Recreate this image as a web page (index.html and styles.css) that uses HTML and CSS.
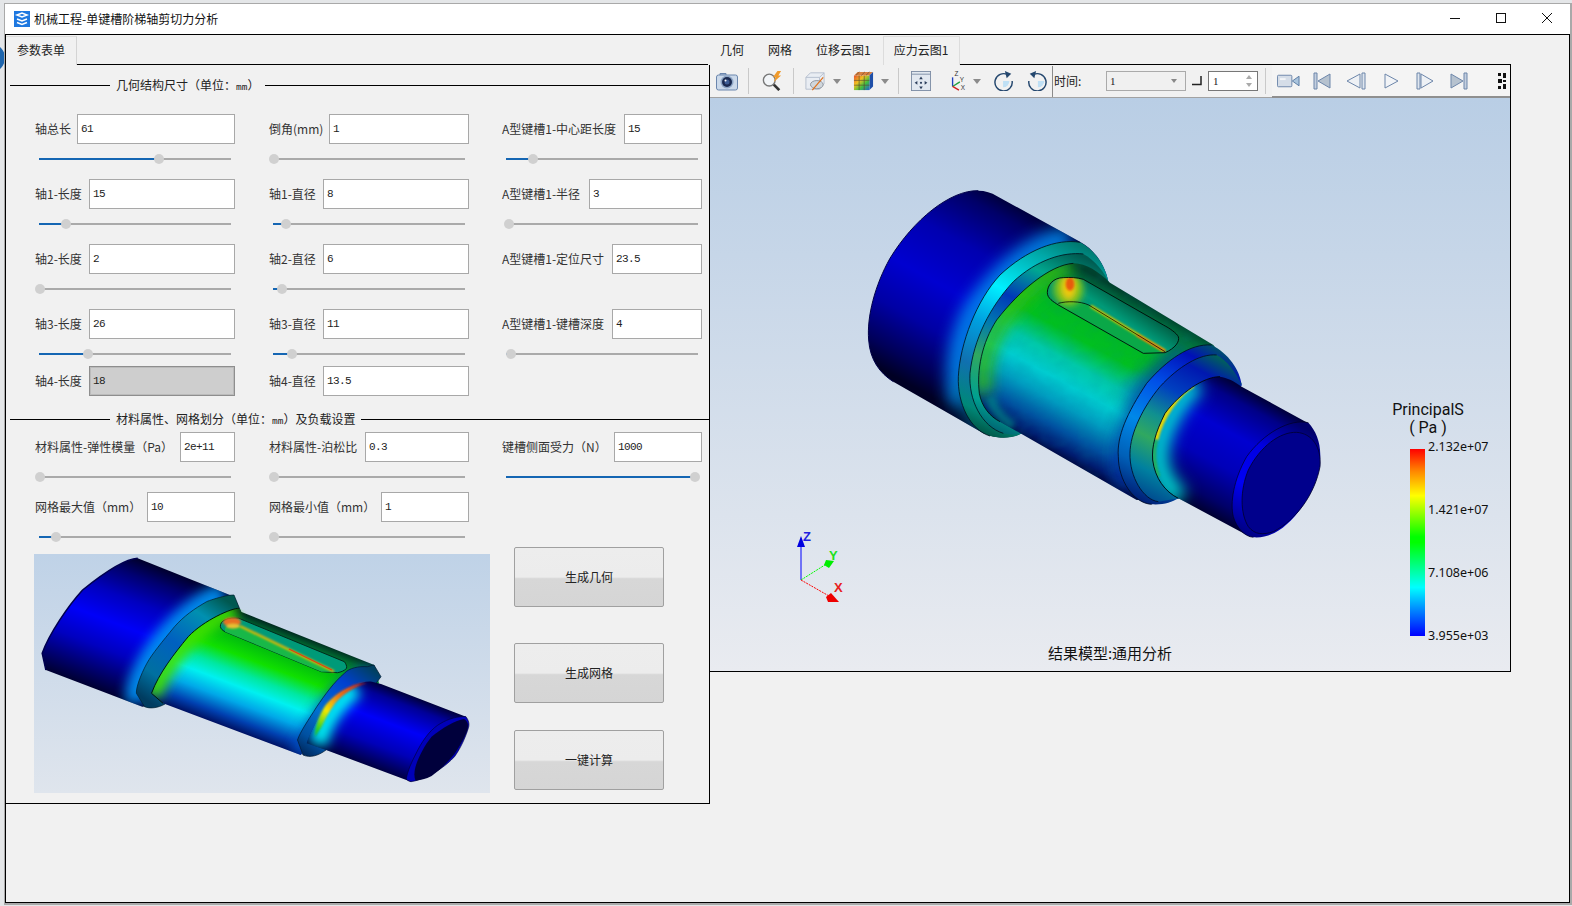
FILE: index.html
```html
<!DOCTYPE html>
<html lang="zh-CN">
<head>
<meta charset="utf-8">
<title>机械工程-单键槽阶梯轴剪切力分析</title>
<link rel="stylesheet" href="styles.css">
</head>
<body>
<div class="desk-blob"></div>
<div class="window">
  <header class="titlebar">
    <svg class="app-icon" viewBox="0 0 16 16"><rect width="16" height="16" fill="#1e78e0"/><path d="M3 4l5-2 5 2-5 2zM3 8l5 2 5-2M3 11.500l5 2 5-2" fill="none" stroke="#fff" stroke-width="1.500"/></svg>
    <span class="title-text">机械工程-单键槽阶梯轴剪切力分析</span>
    <div class="win-controls">
      <svg class="win-btn" viewBox="0 0 10 10"><path d="M0 5.500h10" stroke="#111" fill="none"/></svg>
      <svg class="win-btn" viewBox="0 0 10 10"><rect x=".5" y=".5" width="9" height="9" stroke="#111" fill="none"/></svg>
      <svg class="win-btn" viewBox="0 0 10 10"><path d="M0 0l10 10M10 0L0 10" stroke="#111" fill="none"/></svg>
    </div>
  </header>
  <main class="client">
    <section class="left-panel">
      <div class="tabstrip"><div class="tab tab-form">参数表单</div></div>
      <div class="pane">
        <div class="sec-head first"><i class="rule-l"></i><span class="sec-text">几何结构尺寸（单位：<span class="mono">mm</span>）</span><i class="rule-r"></i></div>

        <div class="grid grid-a">
          <div class="field"><div class="row"><label>轴总长</label><div class="inp w158">61</div></div><div class="slider" style="--v:62.5%"><b></b><u></u></div></div>
          <div class="field"><div class="row"><label>倒角(mm)</label><div class="inp w140">1</div></div><div class="slider" style="--v:.5%"><b></b><u></u></div></div>
          <div class="field"><div class="row"><label>A型键槽1-中心距长度</label><div class="inp w78">15</div></div><div class="slider" style="--v:14%"><b></b><u></u></div></div>

          <div class="field"><div class="row"><label>轴1-长度</label><div class="inp w146">15</div></div><div class="slider" style="--v:14%"><b></b><u></u></div></div>
          <div class="field"><div class="row"><label>轴1-直径</label><div class="inp w146">8</div></div><div class="slider" style="--v:6.800%"><b></b><u></u></div></div>
          <div class="field"><div class="row"><label>A型键槽1-半径</label><div class="inp w113">3</div></div><div class="slider" style="--v:1.600%"><b></b><u></u></div></div>

          <div class="field"><div class="row"><label>轴2-长度</label><div class="inp w146">2</div></div><div class="slider" style="--v:.5%"><b></b><u></u></div></div>
          <div class="field"><div class="row"><label>轴2-直径</label><div class="inp w146">6</div></div><div class="slider" style="--v:4.700%"><b></b><u></u></div></div>
          <div class="field"><div class="row"><label>A型键槽1-定位尺寸</label><div class="inp w90">23.5</div></div></div>

          <div class="field"><div class="row"><label>轴3-长度</label><div class="inp w146">26</div></div><div class="slider" style="--v:25.500%"><b></b><u></u></div></div>
          <div class="field"><div class="row"><label>轴3-直径</label><div class="inp w146">11</div></div><div class="slider" style="--v:9.900%"><b></b><u></u></div></div>
          <div class="field"><div class="row"><label>A型键槽1-键槽深度</label><div class="inp w90">4</div></div><div class="slider" style="--v:2.600%"><b></b><u></u></div></div>
        </div>

        <div class="grid grid-b">
          <div class="field"><div class="row"><label>轴4-长度</label><div class="inp w146 disabled">18</div></div></div>
          <div class="field"><div class="row"><label>轴4-直径</label><div class="inp w146">13.5</div></div></div>
        </div>

        <div class="sec-head second"><i class="rule-l"></i><span class="sec-text">材料属性、网格划分（单位：<span class="mono">mm</span>）及负载设置</span><i class="rule-r"></i></div>

        <div class="grid grid-c">
          <div class="field"><div class="row"><label>材料属性-弹性模量（Pa）</label><div class="inp w55">2e+11</div></div><div class="slider" style="--v:.5%"><b></b><u></u></div></div>
          <div class="field"><div class="row"><label>材料属性-泊松比</label><div class="inp w104">0.3</div></div><div class="slider" style="--v:.5%"><b></b><u></u></div></div>
          <div class="field"><div class="row"><label>键槽侧面受力（N）</label><div class="inp w88">1000</div></div><div class="slider" style="--v:98.400%"><b></b><u></u></div></div>
          <div class="field"><div class="row"><label>网格最大值（mm）</label><div class="inp w88">10</div></div><div class="slider" style="--v:8.900%"><b></b><u></u></div></div>
          <div class="field"><div class="row"><label>网格最小值（mm）</label><div class="inp w88">1</div></div><div class="slider" style="--v:.5%"><b></b><u></u></div></div>
        </div>

        <div class="lower">
          <svg class="preview" viewBox="0 0 456 239">
            <defs>
              <linearGradient id="bgPrev" x1="0" y1="0" x2="0" y2="1"><stop offset="0" stop-color="#bfd2e7"/><stop offset="1" stop-color="#dfe5ed"/></linearGradient>
              <filter id="p2" filterUnits="userSpaceOnUse" x="0" y="0" width="456" height="239"><feGaussianBlur stdDeviation="1.200"/></filter>
              <filter id="p6" filterUnits="userSpaceOnUse" x="0" y="0" width="456" height="239"><feGaussianBlur stdDeviation="6"/></filter>
              <linearGradient id="pBig" gradientUnits="userSpaceOnUse" x1="152" y1="23" x2="103" y2="151">
                <stop offset="0" stop-color="#00002c"/><stop offset=".12" stop-color="#000070"/><stop offset=".3" stop-color="#0000c0"/><stop offset=".5" stop-color="#0000f8"/><stop offset=".7" stop-color="#0000c0"/><stop offset=".9" stop-color="#000060"/><stop offset="1" stop-color="#000030"/>
              </linearGradient>
              <linearGradient id="pFl" gradientUnits="userSpaceOnUse" x1="190" y1="45" x2="118" y2="150">
                <stop offset="0" stop-color="#005850"/><stop offset=".2" stop-color="#0090b0"/><stop offset=".5" stop-color="#0060c0"/><stop offset=".8" stop-color="#0070a0"/><stop offset="1" stop-color="#003c60"/>
              </linearGradient>
              <linearGradient id="pMid" gradientUnits="userSpaceOnUse" x1="273" y1="84" x2="233" y2="189">
                <stop offset="0" stop-color="#002c20"/><stop offset=".07" stop-color="#006a30"/><stop offset=".2" stop-color="#00b810"/><stop offset=".36" stop-color="#10e000"/><stop offset=".5" stop-color="#00e8a0"/><stop offset=".62" stop-color="#00f0f0"/><stop offset=".76" stop-color="#00a8e8"/><stop offset=".9" stop-color="#0040b0"/><stop offset="1" stop-color="#001060"/>
              </linearGradient>
              <linearGradient id="pRf" gradientUnits="userSpaceOnUse" x1="335" y1="112" x2="270" y2="200">
                <stop offset="0" stop-color="#004060"/><stop offset=".25" stop-color="#0040d0"/><stop offset=".6" stop-color="#0070d0"/><stop offset=".85" stop-color="#0050a0"/><stop offset="1" stop-color="#002a60"/>
              </linearGradient>
              <linearGradient id="pSm" gradientUnits="userSpaceOnUse" x1="390" y1="146" x2="361" y2="222">
                <stop offset="0" stop-color="#000038"/><stop offset=".14" stop-color="#000098"/><stop offset=".42" stop-color="#0000f8"/><stop offset=".72" stop-color="#0000b8"/><stop offset="1" stop-color="#000040"/>
              </linearGradient>
              <linearGradient id="pHot" gradientUnits="userSpaceOnUse" x1="330" y1="132" x2="285" y2="190">
                <stop offset="0" stop-color="#d02008"/><stop offset=".3" stop-color="#f07010"/><stop offset=".58" stop-color="#f4e800"/><stop offset=".85" stop-color="#30d020"/><stop offset="1" stop-color="#00a070"/>
              </linearGradient>
              <clipPath id="pcBig"><path d="M103.700 4.300C90 5 66 22 48.600 36C34 52 15 80 8.200 99.300L11.900 116L108.300 152.700L207 58L200.200 42.700Z"/></clipPath>
              <clipPath id="pcMid"><path d="M204.800 54.300C198 54 170 66 154.200 82.700C140 100 125 119 117.500 139.300L129 149.300L266.700 201L345 129.300L340.200 111Z"/></clipPath>
              <clipPath id="pcSm"><path d="M338 127.700C330 126 312 134 301 142.700C290 152 276 178 272.700 189.300L292 196L377 227.700L432 162.700L347 130Z"/></clipPath>
            </defs>
            <rect width="456" height="239" fill="url(#bgPrev)"/>

            <path d="M103.700 4.300C90 5 66 22 48.600 36C34 52 15 80 8.200 99.300L11.900 116L108.300 152.700L131 150L207 58L200.200 42.700Z" fill="url(#pBig)"/>
            <g clip-path="url(#pcBig)">
              <path d="M190 42C170 46 140 70 118 104C108 122 102 134 104 148" fill="none" stroke="#0090f0" stroke-width="24" filter="url(#p6)" opacity=".95"/>
            </g>
            <path d="M103.700 4.300C90 5 66 22 48.600 36C34 52 15 80 8.200 99.300L11.900 116" fill="none" stroke="#000050" stroke-width="1.500"/>

            <path d="M200 41C190 41 172 47.700 172.600 47.700C160 55 150 62 140.500 72.700C128 88 118 100 112.900 109.300C106 122 102 134 102.400 139.300L110.600 152.700C116 155 124 154 131 150L207 58Z" fill="url(#pFl)" stroke="#002030" stroke-width=".7"/>
            <path d="M204.800 54.300C198 54 170 66 154.200 82.700C140 100 125 119 117.500 139.300L129 149.300L266.700 201L345 129.300L340.200 111L207 57.700Z" fill="url(#pMid)"/>
            <g clip-path="url(#pcMid)">
              <path d="M202 58C180 62 156 82 140 104C130 118 122 130 120 142" fill="none" stroke="#40e000" stroke-width="16" filter="url(#p6)"/>
              <path d="M340 122C315 125 295 150 280 175C272 190 268 195 268 200" fill="none" stroke="#0050c0" stroke-width="20" filter="url(#p6)" opacity=".9"/>
            </g>
            <path d="M204.800 54.300C198 54 170 66 154.200 82.700C140 100 125 119 117.500 139.300L129 149.300" fill="none" stroke="#00180c" stroke-width="1"/>

            <path d="M186.400 72.700C186 70 188 67 191 66C195 64 200 64 204.800 64.300L310.400 107.700C312 110 313 112 312.600 114.300C310 117 307 118 303.500 118.700L287.400 117.700L191 77.700C188 76 187 75 186.400 72.700Z" fill="#009a78" stroke="#002018" stroke-width=".9"/>
            <path d="M191 74C196 71 200 71 206 72L300 117.500L287.400 117.700L191 77.700Z" fill="#18b848"/>
            <path d="M206 72L300 117.500" fill="none" stroke="#e8b800" stroke-width="2.200" filter="url(#p2)"/>
            <path d="M255 95L298 116" fill="none" stroke="#e04010" stroke-width="1.300"/>
            <ellipse cx="198" cy="68" rx="9" ry="4.500" fill="#e87020" filter="url(#p2)"/>
            <ellipse cx="199" cy="72" rx="7" ry="2.500" fill="#e8c030" filter="url(#p2)"/>

            <path d="M333.300 112.700C325 112 315 114 310.400 119.300C300 128 290 142 282.800 152.700C275 165 266 178 263.500 186L269 201C276 204 284 202 292 196L347 122.700L340 111Z" fill="url(#pRf)" stroke="#001830" stroke-width=".7"/>

            <path d="M338 127.700C330 126 312 134 301 142.700C290 152 276 178 272.700 189.300L292 196L377 227.700L432 162.700L347 130Z" fill="url(#pSm)"/>
            <g clip-path="url(#pcSm)">
              <path d="M322 134C304 148 290 165 284 190" fill="none" stroke="#00f0f0" stroke-width="18" filter="url(#p6)"/>
            </g>
            <path d="M333 129C322 132 312 138 303 147C297 154 291 165 288 172L281 183C280 176 284 163 291 152C299 141 318 128 333 129Z" fill="url(#pHot)" filter="url(#p2)"/>

            <path d="M432 162.700C436 168 435 172 434.300 174.300C430 188 424 198 420.500 202.700C412 212 402 218 393 222.700C388 225 382 227 377 227.700C374 227 372.500 226 372.300 224.300C375 212 380 204 383.800 196C390 184 398 174 406.800 169.300C414 165 424 162 432 162.700Z" fill="#0000b8" stroke="#000030" stroke-width=".6"/>
            <path d="M430 165C422 166 408 174 397.600 182.700C390 192 384 204 381.500 212.700C380 218 380 223 381.500 226.700C386 226 392 225 397.600 222C406 216 414 208 420.500 200C427 190 434 178 434 172C434 168 432 166 430 165Z" fill="#00003c"/>
          </svg>
          <div class="buttons">
            <div class="btn">生成几何</div>
            <div class="btn btn-2">生成网格</div>
            <div class="btn btn-3">一键计算</div>
          </div>
        </div>
      </div>
    </section>

    <section class="right-panel">
      <div class="tabstrip tabs-right">
        <div class="tab plain t-first">几何</div>
        <div class="tab plain">网格</div>
        <div class="tab plain">位移云图1</div>
        <div class="tab active">应力云图1</div>
      </div>
      <div class="viewer">
        <div class="toolbar">
          <div class="tb-main">
            <svg class="ic w22 m6" viewBox="0 0 22 20"><path d="M4 4V2.500h6V4" fill="#a9bcd6" stroke="#6b86ad"/><rect x=".5" y="4" width="21" height="15" rx="2" fill="#cbd9ea" stroke="#6b86ad"/><circle cx="11" cy="11" r="6.500" fill="#8ea6c6"/><circle cx="11" cy="11" r="5" fill="#1b2a50"/><circle cx="11" cy="11" r="2.500" fill="#3d5c94"/><circle cx="9.500" cy="9.500" r="1" fill="#fff"/></svg>
            <i class="sep m10"></i>
            <svg class="ic w24 m11" viewBox="0 0 24 22"><circle cx="9" cy="10" r="6.500" fill="#f2f5f8" stroke="#777" stroke-width="1.500"/><path d="M14 15l6 6" stroke="#333" stroke-width="3"/><path d="M18 0l-5 7h3l-2 5 8-7h-3l3-5z" fill="#ef9a2c"/></svg>
            <i class="sep m9"></i>
            <svg class="ic w22 m10" viewBox="0 0 22 22"><path d="M1 7l5-5h15v12l-5 6H1z" fill="#e9edf3" stroke="#b3bdcc"/><path d="M1 7h15v13M16 7l5-5" fill="none" stroke="#b3bdcc"/><ellipse cx="13" cy="15" rx="7" ry="4.500" fill="#cfd6dc" stroke="#8b9199"/><path d="M8 21L20 7" stroke="#e07018" stroke-width="1.300"/></svg>
            <svg class="ic arrow m7" viewBox="0 0 8 5"><path d="M0 0h8L4 5z" fill="#8b8b8b"/></svg>
            <svg class="ic w23 m11" viewBox="0 0 23 22"><defs><linearGradient id="cubeF" x1="0" y1="0" x2="1" y2="1"><stop offset="0" stop-color="#e85030"/><stop offset=".35" stop-color="#f0c020"/><stop offset=".65" stop-color="#40c040"/><stop offset="1" stop-color="#2060d0"/></linearGradient></defs><path d="M1 5l4-4h17l-4 4z" fill="#d88040"/><path d="M18 5l4-4v16l-4 4z" fill="#1f4fa8"/><rect x="1" y="5" width="17" height="16" fill="url(#cubeF)"/><path d="M6.700 5v16M12.300 5v16M1 10.300h17M1 15.600h17M7 1L3 5M13 1L9 5M18 1l-4 4" stroke="#5a4a30" stroke-width=".7" fill="none"/></svg>
            <svg class="ic arrow m6" viewBox="0 0 8 5"><path d="M0 0h8L4 5z" fill="#8b8b8b"/></svg>
            <i class="sep m9"></i>
            <svg class="ic w22 m11" viewBox="0 0 22 22"><rect x=".5" y=".5" width="21" height="21" fill="#e2e8f0" stroke="#7c8ba3"/><path d="M1 3.500h20" stroke="#7c8ba3"/><path d="M11 6l2 3H9zM11 20l-2-3h4zM4 13l3-2v4zM18 13l-3 2v-4z" fill="#2d3f5c"/><circle cx="11" cy="13" r="1.200" fill="#2d3f5c"/></svg>
            <svg class="ic w23 m15" viewBox="0 0 23 22"><path d="M5 17V7" stroke="#2040c0" stroke-width="1.500"/><path d="M5 17l8-5" stroke="#20a040" stroke-width="1.500"/><path d="M5 17l7 4" stroke="#d02020" stroke-width="1.500"/><text x="7" y="6" class="axis-t">Z</text><text x="13" y="12" class="axis-t">Y</text><text x="14" y="21" class="axis-t">X</text></svg>
            <svg class="ic arrow m3" viewBox="0 0 8 5"><path d="M0 0h8L4 5z" fill="#8b8b8b"/></svg>
            <svg class="ic w21 m12" viewBox="0 0 21 22"><path d="M10 11h7a7 7 0 0 1-7 7z" fill="#bfe0f5"/><path d="M15 4a9.500 9.500 0 1 0 5 7" fill="none" stroke="#24476e" stroke-width="1.600"/><path d="M12 0l7 3-5 5z" fill="#24476e"/></svg>
            <svg class="ic w21 m13" viewBox="0 0 21 22"><path d="M11 11h7a7 7 0 0 1-7 7z" fill="#bfe0f5"/><path d="M6 4a9.500 9.500 0 1 1-5 7" fill="none" stroke="#24476e" stroke-width="1.600"/><path d="M9 0L2 3l5 5z" fill="#24476e"/></svg>
            <i class="sep dark m4"></i>
            <span class="tb-label">时间:</span>
            <div class="combo"><span>1</span><svg class="combo-arrow" viewBox="0 0 6 4"><path d="M0 0h6L3 4z" fill="#888"/></svg></div>
            <svg class="ic corner" viewBox="0 0 10 10"><path d="M0 8.500h9V0" fill="none" stroke="#222" stroke-width="1.500"/></svg>
            <div class="spin"><span>1</span><svg class="spin-arrows" viewBox="0 0 6 12"><path d="M3 0l3 4H0zM3 12L0 8h6z" fill="#aaa"/></svg></div>
            <i class="sep m7"></i>
          </div>
          <div class="tb-play">
            <svg class="ic w23" viewBox="0 0 24 14"><rect x=".5" y="1" width="15" height="12" rx="1" fill="#d5dde8" stroke="#6d86aa"/><rect x="3" y="4" width="6" height="2" fill="#f2f4f7"/><path d="M16 7l7-5v10z" fill="#a9c4dd" stroke="#5b7ba3"/></svg>
            <svg class="ic pl w18 m13" viewBox="0 0 18 18"><path d="M1 1h3v16H1z" fill="#c4cfdf" stroke="#6d86aa"/><path d="M17 2v14L5 9z" fill="#b6c2cf" stroke="#6d86aa"/></svg>
            <svg class="ic pl w20 m15" viewBox="0 0 20 18"><path d="M14 2v14L1 9z" fill="#eef1f5" stroke="#6d86aa"/><path d="M16 1h3v16h-3z" fill="#dfe6ef" stroke="#6d86aa"/></svg>
            <svg class="ic pl w15 m18" viewBox="0 0 15 18"><path d="M1 2v14l13-7z" fill="#f2f4f7" stroke="#6d86aa"/></svg>
            <svg class="ic pl w18 m17" viewBox="0 0 18 18"><path d="M1 1h3v16H1z" fill="#dfe6ef" stroke="#6d86aa"/><path d="M5 2v14l12-7z" fill="#eef1f5" stroke="#6d86aa"/></svg>
            <svg class="ic pl w18 m16" viewBox="0 0 18 18"><path d="M1 2v14l12-7z" fill="#b6c2cf" stroke="#6d86aa"/><path d="M14 1h3v16h-3z" fill="#c4cfdf" stroke="#6d86aa"/></svg>
            <svg class="ic grip" viewBox="0 0 8 16"><path d="M0 0h3v3H0zM5 0h3v5H5zM0 6h4v4H0zM5 7h3v2H5zM0 13h3v3H0zM5 11h3v5H5z" fill="#111"/></svg>
          </div>
        </div>
        <div class="canvas">
          <svg class="scene" viewBox="710 98 800 573">
            <defs>
              <filter id="b3" filterUnits="userSpaceOnUse" x="0" y="0" width="1470" height="1140"><feGaussianBlur stdDeviation="3"/></filter>
              <filter id="b10" filterUnits="userSpaceOnUse" x="0" y="0" width="1470" height="1140"><feGaussianBlur stdDeviation="10"/></filter>
              <filter id="b22" filterUnits="userSpaceOnUse" x="0" y="0" width="1470" height="1140"><feGaussianBlur stdDeviation="22"/></filter>
              <filter id="mot" filterUnits="userSpaceOnUse" x="0" y="0" width="1470" height="1140">
                <feTurbulence type="fractalNoise" baseFrequency=".022 .03" numOctaves="2" seed="4"/>
                <feColorMatrix type="matrix" values="0 0 0 0 0  0 0 0 0 .25  0 0 0 0 .35  1.800 0 0 0 -.7"/>
              </filter>

              <linearGradient id="gBig" gradientUnits="userSpaceOnUse" x1="590" y1="140" x2="280" y2="700">
                <stop offset="0" stop-color="#00002e"/><stop offset=".1" stop-color="#000068"/><stop offset=".3" stop-color="#0000b0"/><stop offset=".52" stop-color="#0000d0"/><stop offset=".72" stop-color="#0000a4"/><stop offset=".9" stop-color="#000058"/><stop offset="1" stop-color="#000024"/>
              </linearGradient>
              <linearGradient id="gFl1" gradientUnits="userSpaceOnUse" x1="680" y1="220" x2="400" y2="800">
                <stop offset="0" stop-color="#007a70"/><stop offset=".12" stop-color="#00a8a8"/><stop offset=".34" stop-color="#00f0ff"/><stop offset=".52" stop-color="#00a0e0"/><stop offset=".72" stop-color="#1070b0"/><stop offset=".9" stop-color="#008878"/><stop offset="1" stop-color="#005040"/>
              </linearGradient>
              <linearGradient id="gFl2" gradientUnits="userSpaceOnUse" x1="690" y1="255" x2="440" y2="790">
                <stop offset="0" stop-color="#005a50"/><stop offset=".16" stop-color="#00a890"/><stop offset=".34" stop-color="#0038b8"/><stop offset=".5" stop-color="#0078b0"/><stop offset=".68" stop-color="#30a860"/><stop offset=".88" stop-color="#00a090"/><stop offset="1" stop-color="#006070"/>
              </linearGradient>
              <linearGradient id="gMid" gradientUnits="userSpaceOnUse" x1="940" y1="430" x2="690" y2="890">
                <stop offset="0" stop-color="#00402c"/><stop offset=".06" stop-color="#006a3c"/><stop offset=".2" stop-color="#00b428"/><stop offset=".36" stop-color="#00c020"/><stop offset=".5" stop-color="#00c8a8"/><stop offset=".62" stop-color="#00ccd0"/><stop offset=".74" stop-color="#009cc0"/><stop offset=".87" stop-color="#0050a0"/><stop offset=".96" stop-color="#001c70"/><stop offset="1" stop-color="#000c48"/>
              </linearGradient>
              <linearGradient id="gRf1" gradientUnits="userSpaceOnUse" x1="1110" y1="530" x2="870" y2="1000">
                <stop offset="0" stop-color="#005a60"/><stop offset=".12" stop-color="#0010b8"/><stop offset=".34" stop-color="#0050e8"/><stop offset=".58" stop-color="#0088e8"/><stop offset=".8" stop-color="#0060b8"/><stop offset="1" stop-color="#001a70"/>
              </linearGradient>
              <linearGradient id="gRf2" gradientUnits="userSpaceOnUse" x1="1120" y1="560" x2="890" y2="1000">
                <stop offset="0" stop-color="#006a50"/><stop offset=".14" stop-color="#0018b0"/><stop offset=".32" stop-color="#0040c0"/><stop offset=".5" stop-color="#109090"/><stop offset=".64" stop-color="#30a860"/><stop offset=".82" stop-color="#0080a0"/><stop offset="1" stop-color="#00408c"/>
              </linearGradient>
              <linearGradient id="gSm" gradientUnits="userSpaceOnUse" x1="1280" y1="705" x2="1095" y2="1045">
                <stop offset="0" stop-color="#000036"/><stop offset=".12" stop-color="#000088"/><stop offset=".36" stop-color="#0000d0"/><stop offset=".62" stop-color="#0000b8"/><stop offset=".88" stop-color="#000068"/><stop offset="1" stop-color="#000030"/>
              </linearGradient>
              <linearGradient id="gCh" gradientUnits="userSpaceOnUse" x1="1360" y1="770" x2="1180" y2="1090">
                <stop offset="0" stop-color="#00006a"/><stop offset=".3" stop-color="#0000e0"/><stop offset=".65" stop-color="#0000f4"/><stop offset="1" stop-color="#000080"/>
              </linearGradient>
              <linearGradient id="gSlot" gradientUnits="userSpaceOnUse" x1="860" y1="400" x2="780" y2="520">
                <stop offset="0" stop-color="#005a40"/><stop offset=".45" stop-color="#009a78"/><stop offset="1" stop-color="#009060"/>
              </linearGradient>

              <clipPath id="cBig"><path d="M385 62C300 60 190 150 120 265C75 345 50 440 56 510C60 570 90 610 130 635L400 790C440 808 490 805 515 790L775 335C765 285 735 240 690 215L440 78C425 68 405 62 385 62Z"/></clipPath>
              <clipPath id="cMid"><path d="M670 280C600 285 510 360 440 450C395 520 380 600 388 670C395 710 420 740 450 755L860 990L1000 985L1175 640L1090 525L780 338C745 305 710 280 670 280Z"/></clipPath>
              <clipPath id="cSm"><path d="M1110 620C1060 620 990 670 945 730C915 790 905 830 908 870C915 925 945 965 985 985L1200 1100L1375 760L1175 650C1155 635 1130 622 1110 620Z"/></clipPath>
              <clipPath id="cSlot"><path d="M640 323C610 323 592 345 592 368C592 385 610 395 625 405L880 550L945 548C975 535 990 515 985 500C980 490 960 475 940 465L700 328C680 322 660 322 640 323Z"/></clipPath>
            </defs>

            <g transform="translate(850 170) scale(.33333)">
              <path d="M385 62C300 60 190 150 120 265C75 345 50 440 56 510C60 570 90 610 130 635L400 790C440 808 490 805 515 790L775 335C765 285 735 240 690 215L440 78C425 68 405 62 385 62Z" fill="url(#gBig)"/>
              <g clip-path="url(#cBig)">
                <path d="M660 210C560 210 440 320 370 430C325 520 315 620 335 700" fill="none" stroke="#0090f0" stroke-width="70" filter="url(#b22)" opacity=".85"/>
                <path d="M335 640C335 700 370 770 420 800" fill="none" stroke="#006a90" stroke-width="40" filter="url(#b22)" opacity=".8"/>
              </g>
              <path d="M385 62C300 60 190 150 120 265C75 345 50 440 56 510C60 570 90 610 130 635" fill="none" stroke="#000048" stroke-width="3"/>

              <path d="M690 217C620 205 530 240 450 315C380 390 330 520 325 620C322 700 360 780 420 798C460 808 495 803 515 790L775 335C765 285 735 240 690 217Z" fill="url(#gFl1)"/>
              <path d="M690 217C620 205 530 240 450 315C380 390 330 520 325 620C322 700 360 780 420 798" fill="none" stroke="#00141e" stroke-width="2.500"/>
              <path d="M700 252C640 245 560 270 490 335C420 410 370 510 360 610C355 690 395 770 460 790C480 795 500 795 515 790L775 335C765 310 735 270 700 252Z" fill="url(#gFl2)"/>
              <path d="M700 252C640 245 560 270 490 335C420 410 370 510 360 610C355 690 395 770 460 790" fill="none" stroke="#00141e" stroke-width="2.500"/>

              <path d="M670 280C600 285 510 360 440 450C395 520 380 600 388 670C395 710 420 740 450 755L860 990L1000 985L1175 640L1090 525L780 338C745 305 710 280 670 280Z" fill="url(#gMid)"/>
              <g clip-path="url(#cMid)">
                <path d="M660 290C590 300 510 370 450 460C405 530 392 600 400 670" fill="none" stroke="#30c010" stroke-width="46" filter="url(#b22)"/>
                <path d="M420 680C430 720 450 740 490 770" fill="none" stroke="#008a88" stroke-width="30" filter="url(#b10)" opacity=".7"/>
                <ellipse cx="920" cy="690" rx="110" ry="70" transform="rotate(30 920 690)" fill="#0088c8" filter="url(#b22)" opacity=".55"/>
                <path d="M1000 540C920 590 870 680 825 790C810 840 810 900 830 950" fill="none" stroke="#0030a8" stroke-width="50" filter="url(#b22)" opacity=".75"/>
                <rect width="1470" height="1140" filter="url(#mot)" opacity=".14"/>
              </g>
              <path d="M670 280C600 285 510 360 440 450C395 520 380 600 388 670C395 710 420 740 450 755" fill="none" stroke="#00100c" stroke-width="2.500"/>

              <path d="M640 323C610 323 592 345 592 368C592 385 610 395 625 405L880 550L945 548C975 535 990 515 985 500C980 490 960 475 940 465L700 328C680 322 660 322 640 323Z" fill="url(#gSlot)"/>
              <g clip-path="url(#cSlot)">
                <path d="M625 402C650 394 690 394 716 405L945 545L880 552L625 410Z" fill="#0aa848"/>
                <path d="M722 408L945 544" fill="none" stroke="#d8c800" stroke-width="9" filter="url(#b3)"/>
                <path d="M860 495L945 544" fill="none" stroke="#e87010" stroke-width="7" filter="url(#b3)"/>
                <ellipse cx="655" cy="358" rx="46" ry="52" fill="#70c020" filter="url(#b10)"/>
                <ellipse cx="656" cy="352" rx="24" ry="38" fill="#f0c810" filter="url(#b10)"/>
                <ellipse cx="660" cy="342" rx="13" ry="20" fill="#e85010" filter="url(#b3)" opacity=".9"/>
              </g>
              <path d="M640 323C610 323 592 345 592 368C592 385 610 395 625 405L880 550L945 548C975 535 990 515 985 500C980 490 960 475 940 465L700 328C680 322 660 322 640 323Z" fill="none" stroke="#000" stroke-width="2.500"/>
              <path d="M625 400C650 393 690 393 716 405L945 545" fill="none" stroke="#000" stroke-width="2.200"/>

              <path d="M1085 525C1020 520 950 570 890 640C830 730 800 800 805 860C805 930 850 1000 905 1003C940 1005 965 998 985 985L1175 645C1170 600 1135 550 1085 525Z" fill="url(#gRf1)"/>
              <path d="M1085 525C1020 520 950 570 890 640C830 730 800 800 805 860C805 930 850 1000 905 1003" fill="none" stroke="#000c24" stroke-width="2.500"/>
              <path d="M1100 555C1050 550 985 590 930 650C880 710 840 790 840 850C838 920 880 990 925 995L985 985L1175 645C1160 610 1130 570 1100 555Z" fill="url(#gRf2)"/>
              <path d="M1100 555C1050 550 985 590 930 650C880 710 840 790 840 850C838 920 880 990 925 995" fill="none" stroke="#000c24" stroke-width="2.500"/>

              <path d="M1110 620C1060 620 990 670 945 730C915 790 905 830 908 870C915 925 945 965 985 985L1200 1100L1375 760L1175 650C1155 635 1130 622 1110 620Z" fill="url(#gSm)"/>
              <g clip-path="url(#cSm)">
                <path d="M1040 640C980 690 925 790 925 860C925 910 950 950 990 985" fill="none" stroke="#00d0d0" stroke-width="60" filter="url(#b22)"/>
                <path d="M1030 645C985 670 935 740 918 810" fill="none" stroke="#e8d800" stroke-width="13" filter="url(#b3)"/>
                <path d="M918 810C910 840 910 880 925 920" fill="none" stroke="#20b060" stroke-width="12" filter="url(#b3)"/>
              </g>
              <path d="M1110 620C1060 620 990 670 945 730C915 790 905 830 908 870C915 925 945 965 985 985" fill="none" stroke="#000" stroke-width="2.500"/>

              <path d="M1375 758C1320 745 1240 790 1190 860C1150 930 1140 1000 1150 1040C1160 1075 1185 1100 1210 1102C1300 1110 1380 1000 1405 900C1420 840 1405 790 1375 758Z" fill="url(#gCh)"/>
              <path d="M1340 787C1290 785 1230 830 1195 900C1170 960 1170 1030 1195 1070C1215 1095 1240 1095 1270 1085C1340 1050 1395 970 1410 890C1415 830 1385 790 1340 787Z" fill="#00008c" stroke="#000030" stroke-width="2.500"/>
              <path d="M1375 758C1320 745 1240 790 1190 860C1150 930 1140 1000 1150 1040C1160 1075 1185 1100 1210 1102" fill="none" stroke="#000020" stroke-width="2"/>
            </g>

            <g class="triad">
              <path d="M801 580V547" stroke="#0000ff" fill="none"/>
              <path d="M801 536l4 11h-8z" fill="#0000e0"/>
              <path d="M801 580l27-17" stroke="#00ff00" fill="none" stroke-dasharray="2 1"/>
              <path d="M834 561l-5 7-5-3 2-5z" fill="#00ee00"/>
              <path d="M801 580l28 16" stroke="#ff0000" fill="none" stroke-dasharray="2 1"/>
              <path d="M839 602l-11 0-2-5 5-4z" fill="#ee0000"/>
              <text x="803" y="541" class="tri-z">Z</text>
              <text x="829" y="560" class="tri-y">Y</text>
              <text x="834" y="592" class="tri-x">X</text>
            </g>
          </svg>

          <div class="legend">
            <div class="legend-title">PrincipalS</div>
            <div class="legend-title">( Pa )</div>
            <div class="legend-body">
              <div class="colorbar"></div>
              <div class="legend-ticks"><span>2.132e+07</span><span>1.421e+07</span><span>7.108e+06</span><span>3.955e+03</span></div>
            </div>
          </div>
          <div class="caption">结果模型:通用分析</div>
        </div>
      </div>
    </section>
  </main>
</div>
</body>
</html>
```
FILE: styles.css
```css
* { box-sizing: border-box; }
html, body { margin: 0; width: 1572px; height: 906px; overflow: hidden; }
body {
  position: relative;
  padding: 3px 0 0 4px;
  background: #e4e6e8;
  font: 12px/1 "Noto Sans CJK SC", "Noto Sans", sans-serif;
  color: #222;
}
.desk-blob {
  position: absolute; left: -22px; top: 44px;
  width: 27px; height: 28px; border-radius: 50%;
  background: #1f66ad;
}
.window {
  position: relative;
  width: 1568px; height: 902px;
  display: flex; flex-direction: column;
  background: #fff;
  border: solid #a9a9a9;
  border-width: 1px 2px 2px 1px;
}

/* title bar */
.titlebar { height: 30px; flex: none; display: flex; align-items: center; padding: 0 0 1px 9px; background: #fff; }
.app-icon { width: 16px; height: 16px; flex: none; }
.title-text { margin-left: 4px; color: #111; }
.win-controls { margin-left: auto; display: flex; margin-right: 18px; margin-top: -1px; }
.win-btn { width: 10px; height: 10px; margin-left: 36px; }

/* client */
.client {
  flex: 1; display: flex; align-items: flex-start;
  border: 1px solid #000;
  background: #f1f1f1;
}
.left-panel { width: 704px; flex: none; }
.right-panel { width: 801px; flex: none; }

.tabstrip { height: 30px; display: flex; padding-top: 1px; border-bottom: 1px solid #000; }
.tab { height: 29px; display: flex; align-items: center; justify-content: center; background: #f1f1f1; white-space: nowrap; padding-bottom: 2px; }
.tab-form { width: 71px; border-top: 1px solid #dcdcdc; border-right: 1px solid #d4d4d4; }
.tab.plain { padding: 0 12px 2px; }
.t-first { margin-left: -2px; }
.tab.active { padding: 0 0 2px; width: 77px; border: solid #dcdcdc; border-width: 1px 1px 0; }

/* form pane */
.pane { width: 704px; height: 739px; border-right: 1px solid #000; border-bottom: 1px solid #000; padding-top: 13px; }
.sec-head { display: flex; align-items: center; height: 14px; padding-left: 4px; }
.rule-l { width: 100px; height: 1px; background: #000; flex: none; }
.rule-r { flex: 1; height: 1px; background: #000; }
.sec-text { margin: 0 6px; white-space: nowrap; color: #222; }
.mono { font-family: "DejaVu Sans Mono", monospace; font-size: 9.5px; }
.sec-head.second { margin-top: 16px; }

.grid { display: grid; grid-template-columns: 234px 233px 200px; padding-left: 29px; }
.grid-a { margin-top: 22px; row-gap: 13px; }
.grid-b { margin-top: 5px; }
.grid-c { margin-top: 6px; row-gap: 8px; }
.field { height: 52px; width: 200px; }
.grid-b .field { height: 30px; }

.row { display: flex; align-items: center; justify-content: space-between; height: 30px; }
.row label { white-space: nowrap; color: #333; }
.inp {
  height: 30px; flex: none;
  display: flex; align-items: center; padding-left: 3px;
  background: #fff; border: 1px solid #a8a8a8;
  font: 11px "Liberation Mono", monospace; letter-spacing: -.6px; color: #222;
}
.inp.disabled { background: #cecece; border-color: #8e8e8e; box-shadow: inset 0 0 0 1px #bbb; }
.w55 { width: 55px; } .w78 { width: 78px; } .w88 { width: 88px; }
.w90 { width: 90px; } .w104 { width: 104px; } .w113 { width: 113px; } .w140 { width: 140px; }
.w146 { width: 146px; } .w158 { width: 158px; }

.slider { position: relative; height: 2px; margin: 14px 4px 0; background: #aaa; }
.slider b { display: block; height: 2px; width: var(--v); background: #1566b3; }
.slider u {
  position: absolute; top: -4px; left: var(--v);
  width: 10px; height: 10px; margin-left: -5px;
  border-radius: 50%; background: #d0d0d0;
}

/* lower block */
.lower { display: flex; align-items: flex-start; margin-top: 3px; padding-left: 28px; }
.preview { display: block; width: 456px; height: 239px; margin-top: 7px; flex: none; }
.buttons { margin-left: 24px; width: 150px; }
.btn {
  height: 60px; display: flex; align-items: center; justify-content: center;
  border: 1px solid #a0a0a0; border-radius: 2px;
  background: linear-gradient(#ededed 0, #ececec 50%, #d7d7d7 53%, #d5d5d5 100%);
  color: #222;
}
.btn-2 { margin-top: 36px; }
.btn-3 { margin-top: 27px; }

/* viewer */
.tabs-right { padding-left: 0; }
.viewer { width: 801px; border-right: 1px solid #000; border-bottom: 1px solid #000; }
.toolbar { height: 33px; display: flex; }
.tb-main { width: 562px; flex: none; display: flex; align-items: center; border-bottom: 1px solid #a2a2a2; background: #f1f1f1; }
.tb-play { flex: 1; display: flex; align-items: center; padding: 1px 0 0 5px; border-bottom: 2px solid #8f8f8f; background: #f4f4f4; }

.ic { display: block; flex: none; height: 20px; }
.w15 { width: 15px; } .w18 { width: 18px; } .w20 { width: 20px; } .w21 { width: 21px; }
.w22 { width: 22px; } .w23 { width: 23px; } .w24 { width: 24px; }
.ic.arrow { width: 8px; height: 5px; }
.ic.corner { width: 10px; height: 10px; margin-left: 6px; }
.ic.pl { height: 18px; }
.ic.grip { width: 8px; height: 16px; margin-left: 30px; }
.m3 { margin-left: 3px; } .m4 { margin-left: 4px; } .m6 { margin-left: 6px; } .m7 { margin-left: 7px; }
.m9 { margin-left: 9px; } .m10 { margin-left: 10px; } .m11 { margin-left: 11px; } .m12 { margin-left: 12px; }
.m13 { margin-left: 13px; } .m15 { margin-left: 15px; } .m16 { margin-left: 16px; } .m17 { margin-left: 17px; }
.m18 { margin-left: 18px; }
.sep { display: block; flex: none; width: 1px; height: 26px; background: #c9c9c9; }
.sep.dark { height: 31px; background: #8a8a8a; }
.axis-t { font: 7px "Liberation Sans", sans-serif; fill: #333; }
.tb-label { margin-left: 1px; width: 29px; font-size: 12px; white-space: nowrap; }
.combo {
  margin-left: 23px; width: 80px; height: 20px; flex: none;
  display: flex; align-items: center; justify-content: space-between;
  padding: 0 8px 0 3px;
  border: 1px solid #aaa; background: #f0f0f0;
  font: 11px "Liberation Serif", serif;
}
.combo-arrow { width: 6px; height: 4px; }
.spin {
  margin-left: 6px; width: 50px; height: 20px; flex: none;
  display: flex; align-items: center; justify-content: space-between;
  padding: 0 5px 0 4px;
  border: 1px solid #777; background: #fff;
  font: 11px "Liberation Serif", serif;
}
.spin-arrows { width: 6px; height: 12px; }

.canvas {
  position: relative; height: 573px;
  background: linear-gradient(#b9cee5, #e9ebf0);
}
.scene { position: absolute; left: 0; top: 0; width: 800px; height: 573px; }
.tri-z, .tri-y, .tri-x { font: bold 13px "Liberation Sans", sans-serif; }
.tri-z { fill: #2020e0; } .tri-y { fill: #20e020; } .tri-x { fill: #e82020; }

.legend { position: absolute; left: 671px; top: 303px; width: 94px; }
.legend-title { height: 18px; text-align: center; white-space: pre; font: 16px/18px "Roboto", sans-serif; color: #111; }
.legend-body { display: flex; margin-top: 12px; padding-left: 29px; }
.colorbar {
  width: 15px; height: 187px; flex: none;
  background: linear-gradient(#f00 0, #f80 12%, #ff0 25%, #0f0 47%, #0f0 50%, #0ff 74%, #08f 86%, #00f 100%);
}
.legend-ticks {
  margin: -10px 0 0 3px; height: 205px;
  display: flex; flex-direction: column; justify-content: space-between;
  font: 12.500px/16px "Noto Sans", sans-serif; color: #111;
}
.caption {
  position: absolute; left: 0; right: 0; top: 546px;
  text-align: center; font-size: 15px; line-height: 18px; color: #111;
}
```
